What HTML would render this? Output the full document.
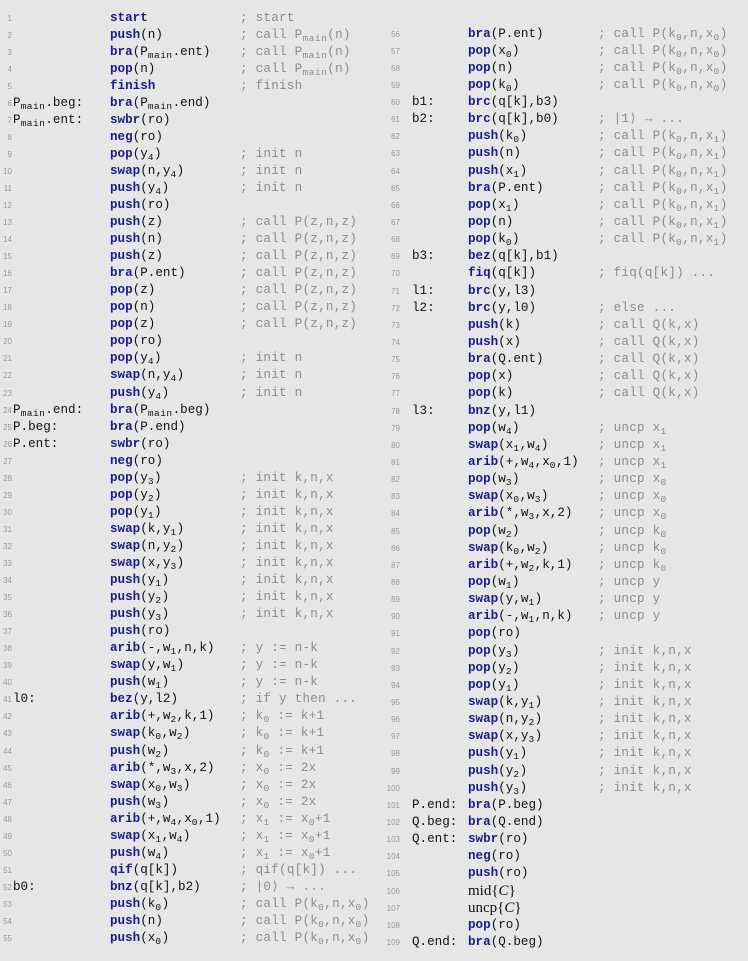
<!DOCTYPE html>
<html><head><meta charset="utf-8"><style>
html,body{margin:0;padding:0}
body{width:748px;height:961px;background:#e6e6e6;position:relative;overflow:hidden;font-family:"Liberation Mono",monospace;font-size:12.6px;color:#111}
.c{position:absolute;width:375px}
.c>div{position:relative;height:17.05px;line-height:17px;white-space:pre}
.r>div{height:17.15px}
i,u,b,s{position:absolute;top:0;font-style:normal;text-decoration:none;font-weight:normal}
i{font-family:"Liberation Sans",sans-serif;font-size:8px;color:#999;text-align:right;width:12px}
b em{font-style:normal;font-weight:bold;color:#1b1b8a}
s{color:#8c8c8c;letter-spacing:0.25px}
sub{font-size:9.5px;vertical-align:-3px;line-height:0;letter-spacing:0.5px}
.l i{left:0px}.l u{left:13px}.l b{left:110px}.l s{left:240px}
.r i{left:386px;width:14px}.r u{left:412px}.r b{left:468px}.r s{left:598px}
.m{font-family:"Liberation Serif",serif;font-size:15px}
</style></head><body>
<div class="c l" style="left:0;top:9.5px">
<div><i>1</i><b><em>start</em></b><s>; start</s></div>
<div><i>2</i><b><em>push</em>(n)</b><s>; call P<sub>main</sub>(n)</s></div>
<div><i>3</i><b><em>bra</em>(P<sub>main</sub>.ent)</b><s>; call P<sub>main</sub>(n)</s></div>
<div><i>4</i><b><em>pop</em>(n)</b><s>; call P<sub>main</sub>(n)</s></div>
<div><i>5</i><b><em>finish</em></b><s>; finish</s></div>
<div><i>6</i><u>P<sub>main</sub>.beg:</u><b><em>bra</em>(P<sub>main</sub>.end)</b></div>
<div><i>7</i><u>P<sub>main</sub>.ent:</u><b><em>swbr</em>(ro)</b></div>
<div><i>8</i><b><em>neg</em>(ro)</b></div>
<div><i>9</i><b><em>pop</em>(y<sub>4</sub>)</b><s>; init n</s></div>
<div><i>10</i><b><em>swap</em>(n,y<sub>4</sub>)</b><s>; init n</s></div>
<div><i>11</i><b><em>push</em>(y<sub>4</sub>)</b><s>; init n</s></div>
<div><i>12</i><b><em>push</em>(ro)</b></div>
<div><i>13</i><b><em>push</em>(z)</b><s>; call P(z,n,z)</s></div>
<div><i>14</i><b><em>push</em>(n)</b><s>; call P(z,n,z)</s></div>
<div><i>15</i><b><em>push</em>(z)</b><s>; call P(z,n,z)</s></div>
<div><i>16</i><b><em>bra</em>(P.ent)</b><s>; call P(z,n,z)</s></div>
<div><i>17</i><b><em>pop</em>(z)</b><s>; call P(z,n,z)</s></div>
<div><i>18</i><b><em>pop</em>(n)</b><s>; call P(z,n,z)</s></div>
<div><i>19</i><b><em>pop</em>(z)</b><s>; call P(z,n,z)</s></div>
<div><i>20</i><b><em>pop</em>(ro)</b></div>
<div><i>21</i><b><em>pop</em>(y<sub>4</sub>)</b><s>; init n</s></div>
<div><i>22</i><b><em>swap</em>(n,y<sub>4</sub>)</b><s>; init n</s></div>
<div><i>23</i><b><em>push</em>(y<sub>4</sub>)</b><s>; init n</s></div>
<div><i>24</i><u>P<sub>main</sub>.end:</u><b><em>bra</em>(P<sub>main</sub>.beg)</b></div>
<div><i>25</i><u>P.beg:</u><b><em>bra</em>(P.end)</b></div>
<div><i>26</i><u>P.ent:</u><b><em>swbr</em>(ro)</b></div>
<div><i>27</i><b><em>neg</em>(ro)</b></div>
<div><i>28</i><b><em>pop</em>(y<sub>3</sub>)</b><s>; init k,n,x</s></div>
<div><i>29</i><b><em>pop</em>(y<sub>2</sub>)</b><s>; init k,n,x</s></div>
<div><i>30</i><b><em>pop</em>(y<sub>1</sub>)</b><s>; init k,n,x</s></div>
<div><i>31</i><b><em>swap</em>(k,y<sub>1</sub>)</b><s>; init k,n,x</s></div>
<div><i>32</i><b><em>swap</em>(n,y<sub>2</sub>)</b><s>; init k,n,x</s></div>
<div><i>33</i><b><em>swap</em>(x,y<sub>3</sub>)</b><s>; init k,n,x</s></div>
<div><i>34</i><b><em>push</em>(y<sub>1</sub>)</b><s>; init k,n,x</s></div>
<div><i>35</i><b><em>push</em>(y<sub>2</sub>)</b><s>; init k,n,x</s></div>
<div><i>36</i><b><em>push</em>(y<sub>3</sub>)</b><s>; init k,n,x</s></div>
<div><i>37</i><b><em>push</em>(ro)</b></div>
<div><i>38</i><b><em>arib</em>(-,w<sub>1</sub>,n,k)</b><s>; y := n-k</s></div>
<div><i>39</i><b><em>swap</em>(y,w<sub>1</sub>)</b><s>; y := n-k</s></div>
<div><i>40</i><b><em>push</em>(w<sub>1</sub>)</b><s>; y := n-k</s></div>
<div><i>41</i><u>l0:</u><b><em>bez</em>(y,l2)</b><s>; if y then ...</s></div>
<div><i>42</i><b><em>arib</em>(+,w<sub>2</sub>,k,1)</b><s>; k<sub>0</sub> := k+1</s></div>
<div><i>43</i><b><em>swap</em>(k<sub>0</sub>,w<sub>2</sub>)</b><s>; k<sub>0</sub> := k+1</s></div>
<div><i>44</i><b><em>push</em>(w<sub>2</sub>)</b><s>; k<sub>0</sub> := k+1</s></div>
<div><i>45</i><b><em>arib</em>(*,w<sub>3</sub>,x,2)</b><s>; x<sub>0</sub> := 2x</s></div>
<div><i>46</i><b><em>swap</em>(x<sub>0</sub>,w<sub>3</sub>)</b><s>; x<sub>0</sub> := 2x</s></div>
<div><i>47</i><b><em>push</em>(w<sub>3</sub>)</b><s>; x<sub>0</sub> := 2x</s></div>
<div><i>48</i><b><em>arib</em>(+,w<sub>4</sub>,x<sub>0</sub>,1)</b><s>; x<sub>1</sub> := x<sub>0</sub>+1</s></div>
<div><i>49</i><b><em>swap</em>(x<sub>1</sub>,w<sub>4</sub>)</b><s>; x<sub>1</sub> := x<sub>0</sub>+1</s></div>
<div><i>50</i><b><em>push</em>(w<sub>4</sub>)</b><s>; x<sub>1</sub> := x<sub>0</sub>+1</s></div>
<div><i>51</i><b><em>qif</em>(q[k])</b><s>; qif(q[k]) ...</s></div>
<div><i>52</i><u>b0:</u><b><em>bnz</em>(q[k],b2)</b><s>; |0⟩ → ...</s></div>
<div><i>53</i><b><em>push</em>(k<sub>0</sub>)</b><s>; call P(k<sub>0</sub>,n,x<sub>0</sub>)</s></div>
<div><i>54</i><b><em>push</em>(n)</b><s>; call P(k<sub>0</sub>,n,x<sub>0</sub>)</s></div>
<div><i>55</i><b><em>push</em>(x<sub>0</sub>)</b><s>; call P(k<sub>0</sub>,n,x<sub>0</sub>)</s></div>
</div>
<div class="c r" style="left:0;top:25.5px;width:748px">
<div><i>56</i><b><em>bra</em>(P.ent)</b><s>; call P(k<sub>0</sub>,n,x<sub>0</sub>)</s></div>
<div><i>57</i><b><em>pop</em>(x<sub>0</sub>)</b><s>; call P(k<sub>0</sub>,n,x<sub>0</sub>)</s></div>
<div><i>58</i><b><em>pop</em>(n)</b><s>; call P(k<sub>0</sub>,n,x<sub>0</sub>)</s></div>
<div><i>59</i><b><em>pop</em>(k<sub>0</sub>)</b><s>; call P(k<sub>0</sub>,n,x<sub>0</sub>)</s></div>
<div><i>60</i><u>b1:</u><b><em>brc</em>(q[k],b3)</b></div>
<div><i>61</i><u>b2:</u><b><em>brc</em>(q[k],b0)</b><s>; |1⟩ → ...</s></div>
<div><i>62</i><b><em>push</em>(k<sub>0</sub>)</b><s>; call P(k<sub>0</sub>,n,x<sub>1</sub>)</s></div>
<div><i>63</i><b><em>push</em>(n)</b><s>; call P(k<sub>0</sub>,n,x<sub>1</sub>)</s></div>
<div><i>64</i><b><em>push</em>(x<sub>1</sub>)</b><s>; call P(k<sub>0</sub>,n,x<sub>1</sub>)</s></div>
<div><i>65</i><b><em>bra</em>(P.ent)</b><s>; call P(k<sub>0</sub>,n,x<sub>1</sub>)</s></div>
<div><i>66</i><b><em>pop</em>(x<sub>1</sub>)</b><s>; call P(k<sub>0</sub>,n,x<sub>1</sub>)</s></div>
<div><i>67</i><b><em>pop</em>(n)</b><s>; call P(k<sub>0</sub>,n,x<sub>1</sub>)</s></div>
<div><i>68</i><b><em>pop</em>(k<sub>0</sub>)</b><s>; call P(k<sub>0</sub>,n,x<sub>1</sub>)</s></div>
<div><i>69</i><u>b3:</u><b><em>bez</em>(q[k],b1)</b></div>
<div><i>70</i><b><em>fiq</em>(q[k])</b><s>; fiq(q[k]) ...</s></div>
<div><i>71</i><u>l1:</u><b><em>brc</em>(y,l3)</b></div>
<div><i>72</i><u>l2:</u><b><em>brc</em>(y,l0)</b><s>; else ...</s></div>
<div><i>73</i><b><em>push</em>(k)</b><s>; call Q(k,x)</s></div>
<div><i>74</i><b><em>push</em>(x)</b><s>; call Q(k,x)</s></div>
<div><i>75</i><b><em>bra</em>(Q.ent)</b><s>; call Q(k,x)</s></div>
<div><i>76</i><b><em>pop</em>(x)</b><s>; call Q(k,x)</s></div>
<div><i>77</i><b><em>pop</em>(k)</b><s>; call Q(k,x)</s></div>
<div><i>78</i><u>l3:</u><b><em>bnz</em>(y,l1)</b></div>
<div><i>79</i><b><em>pop</em>(w<sub>4</sub>)</b><s>; uncp x<sub>1</sub></s></div>
<div><i>80</i><b><em>swap</em>(x<sub>1</sub>,w<sub>4</sub>)</b><s>; uncp x<sub>1</sub></s></div>
<div><i>81</i><b><em>arib</em>(+,w<sub>4</sub>,x<sub>0</sub>,1)</b><s>; uncp x<sub>1</sub></s></div>
<div><i>82</i><b><em>pop</em>(w<sub>3</sub>)</b><s>; uncp x<sub>0</sub></s></div>
<div><i>83</i><b><em>swap</em>(x<sub>0</sub>,w<sub>3</sub>)</b><s>; uncp x<sub>0</sub></s></div>
<div><i>84</i><b><em>arib</em>(*,w<sub>3</sub>,x,2)</b><s>; uncp x<sub>0</sub></s></div>
<div><i>85</i><b><em>pop</em>(w<sub>2</sub>)</b><s>; uncp k<sub>0</sub></s></div>
<div><i>86</i><b><em>swap</em>(k<sub>0</sub>,w<sub>2</sub>)</b><s>; uncp k<sub>0</sub></s></div>
<div><i>87</i><b><em>arib</em>(+,w<sub>2</sub>,k,1)</b><s>; uncp k<sub>0</sub></s></div>
<div><i>88</i><b><em>pop</em>(w<sub>1</sub>)</b><s>; uncp y</s></div>
<div><i>89</i><b><em>swap</em>(y,w<sub>1</sub>)</b><s>; uncp y</s></div>
<div><i>90</i><b><em>arib</em>(-,w<sub>1</sub>,n,k)</b><s>; uncp y</s></div>
<div><i>91</i><b><em>pop</em>(ro)</b></div>
<div><i>92</i><b><em>pop</em>(y<sub>3</sub>)</b><s>; init k,n,x</s></div>
<div><i>93</i><b><em>pop</em>(y<sub>2</sub>)</b><s>; init k,n,x</s></div>
<div><i>94</i><b><em>pop</em>(y<sub>1</sub>)</b><s>; init k,n,x</s></div>
<div><i>95</i><b><em>swap</em>(k,y<sub>1</sub>)</b><s>; init k,n,x</s></div>
<div><i>96</i><b><em>swap</em>(n,y<sub>2</sub>)</b><s>; init k,n,x</s></div>
<div><i>97</i><b><em>swap</em>(x,y<sub>3</sub>)</b><s>; init k,n,x</s></div>
<div><i>98</i><b><em>push</em>(y<sub>1</sub>)</b><s>; init k,n,x</s></div>
<div><i>99</i><b><em>push</em>(y<sub>2</sub>)</b><s>; init k,n,x</s></div>
<div><i>100</i><b><em>push</em>(y<sub>3</sub>)</b><s>; init k,n,x</s></div>
<div><i>101</i><u>P.end:</u><b><em>bra</em>(P.beg)</b></div>
<div><i>102</i><u>Q.beg:</u><b><em>bra</em>(Q.end)</b></div>
<div><i>103</i><u>Q.ent:</u><b><em>swbr</em>(ro)</b></div>
<div><i>104</i><b><em>neg</em>(ro)</b></div>
<div><i>105</i><b><em>push</em>(ro)</b></div>
<div><i>106</i><b class="m">mid{<span style="font-style:italic">C</span>}</b></div>
<div><i>107</i><b class="m">uncp{<span style="font-style:italic">C</span>}</b></div>
<div><i>108</i><b><em>pop</em>(ro)</b></div>
<div><i>109</i><u>Q.end:</u><b><em>bra</em>(Q.beg)</b></div>
</div>
</body></html>
